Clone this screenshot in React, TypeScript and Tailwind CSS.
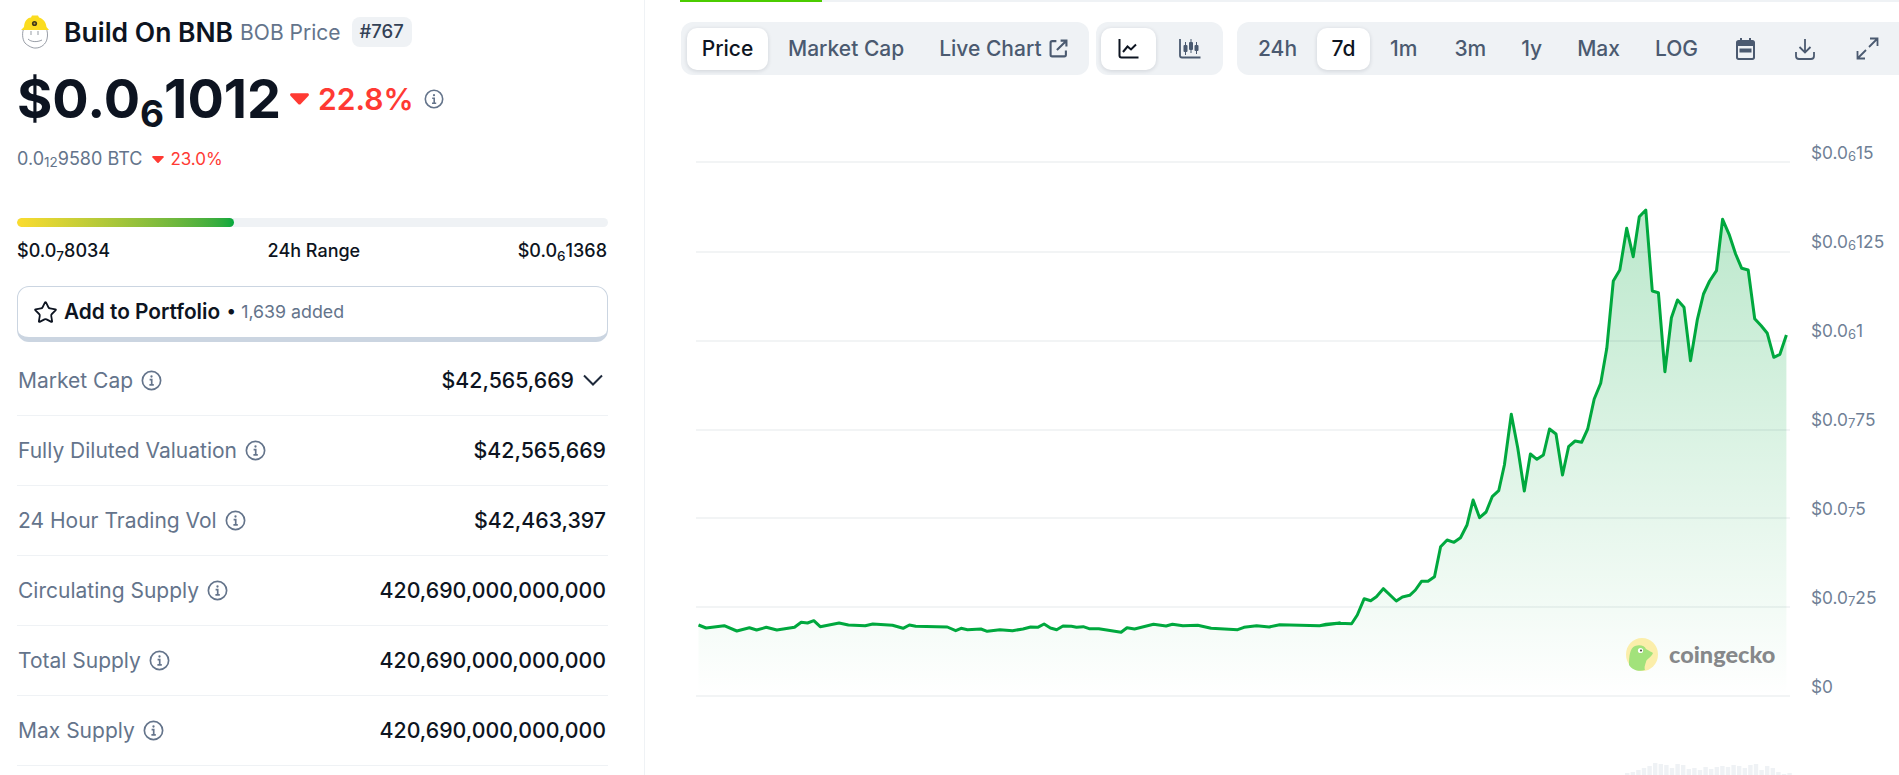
import { Star } from 'lucide-react';

const xFrom = (x: number, x0: number, k: number) => x0 + x / k;

// traced from the picture, flat part then the climb
const flat = [[44,195],[62,204],[105,197],[135,213],[165,203],[182,210],[205,202],[230,210],[272,202],[288,187],[303,189],[318,182],[333,200],[378,189],[400,195],[440,197],[458,192],[505,196],[530,205],[545,195],[560,199],[635,201],[655,212],[668,205],[683,209],[715,207],[730,214],[760,209],[790,212],[815,207],[833,201],[850,202],[865,192],[880,204],[895,209],[910,198],[930,199],[942,202],[958,200],[972,206],[995,206],[1048,217],[1062,203],[1080,207],[1125,193],[1155,198],[1170,193],[1195,197],[1230,196],[1262,205],[1325,209],[1340,202],[1370,197],[1400,201],[1425,194],[1520,197],[1535,193],[1568,189]].map(([x, y]) => [xFrom(x, 680, 2.376), 560 + y / 3]);
const climb = [[50,467],[100,460],[135,461],[150,435],[168,386],[185,392],[200,380],[218,356],[252,393],[268,381],[287,376],[302,360],[318,334],[335,334],[352,320],[368,230],[385,210],[403,217],[420,203],[437,165],[453,90],[470,143],[487,126],[503,80],[520,62]].map(([x, y]) => [xFrom(x, 1300, 2.617), 470 + y / 3]);
const peak = [[535,855],[553,703],[570,805],[587,933],[603,822],[620,838],[637,825],[653,747],[670,762],[687,885],[703,800],[720,783],[737,787],[753,747],[770,657],[787,610],[803,505],[820,303],[837,270],[855,145],[872,230],[888,110],[905,90],[922,333],[938,338],[955,575],[972,413],[988,360],[1005,382],[1022,542],[1040,418],[1056,342],[1072,303],[1090,272],[1106,118],[1123,163],[1140,222],[1156,265],[1173,270],[1190,416],[1207,437],[1223,460],[1240,532],[1256,523],[1273,465]].map(([x, y]) => [xFrom(x, 1300, 2.617), 180 + y / 3]);
const points = [...flat, ...climb, ...peak];
const linePath = points.map(([x, y], i) => `${i ? 'L' : 'M'}${x.toFixed(1)} ${y.toFixed(1)}`).join(' ');
const lastX = points[points.length - 1][0].toFixed(1);
const areaPath = `${linePath} L${lastX} 696 L${points[0][0].toFixed(1)} 696 Z`;

const gridYs = [162, 252, 341, 430, 518, 607, 696];
const volumes = [2, 3, 5, 7, 9, 12, 11, 10, 7, 11, 10, 6, 7, 5, 8, 6, 8, 9, 8, 10, 9, 7, 10, 11, 5, 9, 7, 3, 1, 2];

const stats = [
  { label: 'Market Cap', value: '$42,565,669', chevron: true },
  { label: 'Fully Diluted Valuation', value: '$42,565,669' },
  { label: '24 Hour Trading Vol', value: '$42,463,397' },
  { label: 'Circulating Supply', value: '420,690,000,000,000' },
  { label: 'Total Supply', value: '420,690,000,000,000' },
  { label: 'Max Supply', value: '420,690,000,000,000' },
];

function InfoIcon({ className = 'w-[21px] h-[21px]' }: { className?: string }) {
  return (
    <svg className={`${className} shrink-0 text-[#64748b]`} viewBox="0 0 20 20" fill="none" stroke="currentColor">
      <circle cx="10" cy="10" r="8.7" strokeWidth="1.6" />
      <path d="M8.2 9.2H10.2V14M8 14.2H12.2" strokeWidth="1.6" />
      <circle cx="10" cy="6.2" r="1.1" fill="currentColor" stroke="none" />
    </svg>
  );
}

function DownTriangle({ className }: { className: string }) {
  return (
    <svg className={className} viewBox="0 0 20 12" fill="#ff3a33">
      <path d="M1.6 0H18.4C19.7 0 20.4 1.5 19.5 2.5L11.1 11.4C10.5 12 9.5 12 8.9 11.4L0.5 2.5C-0.4 1.5 0.3 0 1.6 0Z" />
    </svg>
  );
}

function HardHatLogo() {
  return (
    <svg className="w-[30px] h-[34px] shrink-0" viewBox="0 0 30 34" fill="none">
      <path d="M4 13C2 17 2 24 5 28C8 31 13 33.5 16 33C21 33 26 29 27 24C28 20 27.5 16 26 13" stroke="#6b7280" strokeWidth="0.7" fill="#fff" />
      <path d="M11 16V20M18 16V20M8 24C11 27 17 27.5 22 25" stroke="#6b7280" strokeWidth="0.7" />
      <path d="M1 15L4 12C4.5 6 7 3 11 2.5L12 0.5H18L19 2.5C23 3.5 26 7 26.5 12L29 15Z" fill="#fbdc1f" />
      <circle cx="14.5" cy="8.5" r="2.6" fill="#3f3a1a" />
      <circle cx="14.5" cy="8.5" r="1" fill="#c9a227" />
    </svg>
  );
}

function GeckoMark() {
  return (
    <svg className="w-[32px] h-[33px] shrink-0" viewBox="0 0 32 33">
      <ellipse cx="16" cy="16.5" rx="16" ry="16.5" fill="#fbeeaa" />
      <path d="M3 27C3 18 4 10 9 8C14 6 19 8 20 11C23 13 26 14 27 15C25 20 20 21 20 24C19 27 18 30 19 32C13 34 6 32 3 27Z" fill="#a2e27b" />
      <circle cx="14.5" cy="12.5" r="2.6" fill="#fff" />
      <circle cx="15" cy="12.5" r="1.1" fill="#57534e" />
    </svg>
  );
}

function TabBtn({ children, active }: { children: React.ReactNode; active?: boolean }) {
  return (
    <div className={`h-[42px] flex items-center justify-center rounded-[10px] ${active ? 'bg-white text-[#0d1421] shadow-[0_1px_4px_rgba(15,23,42,0.14)]' : 'text-[#4b5a70]'}`}>
      {children}
    </div>
  );
}

function AxisLabel({ head, sub, tail }: { head: string; sub?: string; tail?: string }) {
  return (
    <div className="h-[89px] flex items-center text-[17.3px] text-[#6f7f96] leading-none">
      {head}
      {sub && <span className="text-[13px] relative top-[4px]">{sub}</span>}
      {tail}
    </div>
  );
}

export default function App() {
  return (
    <div className="h-[775px] w-[1899px] overflow-hidden bg-white flex font-[family-name:Inter] text-[#0d1421]">
      {/* Left column */}
      <div className="w-[645px] h-full shrink-0 border-r border-[#eff2f5] pl-[17px] pr-[36px] pt-[15px]">
        <div className="flex items-center h-[34px] pl-[3px]">
          <HardHatLogo />
          <span className="ml-[14px] text-[26.5px] font-semibold leading-none">Build On BNB</span>
          <span className="ml-[7px] text-[21px] text-[#64748b] leading-none">BOB Price</span>
          <span className="ml-[11px] h-[30px] px-[8px] flex items-center rounded-[8px] bg-[#eff2f5] text-[18.5px] font-medium text-[#334155]">#767</span>
        </div>

        <div className="flex items-center h-[66px] mt-[17px]">
          <span className="text-[54px] font-bold leading-none">
            $0.0<span className="text-[37px] relative top-[9px]">6</span>1012
          </span>
          <DownTriangle className="w-[19px] h-[12px] ml-[9px] shrink-0" />
          <span className="ml-[9px] text-[30px] font-semibold text-[#ff3a33] leading-none">22.8%</span>
          <InfoIcon className="w-[20px] h-[20px] ml-[10px]" />
        </div>

        <div className="flex items-center h-[24px] mt-[15px] text-[18px] text-[#64748b] leading-none">
          0.0<span className="text-[13.5px] relative top-[4px]">12</span>9580 BTC
          <DownTriangle className="w-[12px] h-[7px] ml-[10px] shrink-0" />
          <span className="ml-[6px] text-[17px] text-[#ff3a33]">23.0%</span>
        </div>

        <div className="mt-[47px] h-[9px] rounded-full bg-[#eff2f5] overflow-hidden">
          <div className="h-full w-[217px] rounded-full bg-gradient-to-r from-[#fbdc2e] to-[#00a83e]" />
        </div>

        <div className="flex items-center justify-between h-[24px] mt-[12px] text-[18px] font-medium leading-none">
          <span>$0.0<span className="text-[13.5px] relative top-[4px]">7</span>8034</span>
          <span>24h Range</span>
          <span className="pr-[1px]">$0.0<span className="text-[13.5px] relative top-[4px]">6</span>1368</span>
        </div>

        <div className="mt-[23px] h-[56px] rounded-[12px] border-[1.5px] border-b-[5px] border-[#cbd5e1] flex items-center pl-[15px] bg-white">
          <Star className="w-[25px] h-[25px] text-[#0d1421] shrink-0" strokeWidth={1.7} />
          <span className="ml-[6px] text-[20.8px] font-semibold leading-none">Add to Portfolio</span>
          <span className="ml-[6px] text-[17.8px] text-[#64748b] leading-none"><span className="text-[#0d1421]">•</span> 1,639 added</span>
        </div>

        <div className="mt-[4px]">
          {stats.map((s) => (
            <div key={s.label} className="h-[70px] flex items-center justify-between border-b-[1.5px] border-[#eff2f5] pl-[1px] pr-[2px]">
              <div className="flex items-center gap-[8px] text-[21px] text-[#64748b] leading-none">
                {s.label}
                <InfoIcon />
              </div>
              <div className="flex items-center text-[21.3px] font-medium leading-none">
                {s.value}
                {s.chevron && (
                  <svg className="w-[20px] h-[12px] ml-[9px] mr-[3px] text-[#1e293b]" viewBox="0 0 20 12" fill="none" stroke="currentColor" strokeWidth="2">
                    <path d="M1 1.5L10 10.5L19 1.5" />
                  </svg>
                )}
              </div>
            </div>
          ))}
        </div>
      </div>

      {/* Right column */}
      <div className="flex-1 min-w-0 h-full">
        <div className="h-[2px] bg-[#eff2f5] ml-[35px]">
          <div className="h-full w-[142px] bg-[#4bcc00]" />
        </div>

        <div className="flex items-center gap-[7px] ml-[36px] mt-[20px] text-[21px] font-medium leading-none">
          <div className="h-[53px] w-[408px] shrink-0 rounded-[12px] bg-[#eff2f5] flex items-center px-[6px]">
            <div className="w-[81px]"><TabBtn active>Price</TabBtn></div>
            <div className="ml-[20px]"><TabBtn>Market Cap</TabBtn></div>
            <div className="ml-[35px]">
              <TabBtn>
                Live Chart
                <svg className="w-[19px] h-[19px] ml-[7px]" viewBox="0 0 18 18" fill="none" stroke="currentColor" strokeWidth="2">
                  <path d="M7 2H3C2 2 1.5 2.5 1.5 3.5V15C1.5 16 2 16.5 3 16.5H14.5C15.5 16.5 16 16 16 15V11" />
                  <path d="M11 1.5H16.5V7M16.2 1.8L7.5 10.5" />
                </svg>
              </TabBtn>
            </div>
          </div>

          <div className="h-[53px] w-[127px] shrink-0 rounded-[12px] bg-[#eff2f5] flex items-center px-[5px]">
            <div className="w-[55px]">
              <TabBtn active>
                <svg className="w-[21px] h-[21px]" viewBox="0 0 21 21" fill="none" stroke="currentColor" strokeWidth="2">
                  <path d="M1.5 1V17.5C1.5 19 2.3 19.5 3.5 19.5H20.5" />
                  <path d="M5 14L9.5 8.5L13 11.5L18 6.5" />
                </svg>
              </TabBtn>
            </div>
            <div className="ml-[23px]">
              <TabBtn>
                <svg className="w-[22px] h-[21px]" viewBox="0 0 22 21" fill="currentColor">
                  <path d="M1 1V17.5C1 19 1.8 19.5 3 19.5H21.5" fill="none" stroke="currentColor" strokeWidth="1.8" />
                  <rect x="4.5" y="7" width="4" height="7" rx="1" /><rect x="6" y="4" width="1" height="13" />
                  <rect x="10" y="4" width="4" height="8" rx="1" /><rect x="11.5" y="1" width="1" height="14" />
                  <rect x="15.5" y="7" width="4" height="6" rx="1" /><rect x="17" y="4" width="1" height="12" />
                </svg>
              </TabBtn>
            </div>
          </div>

          <div className="h-[53px] flex-1 ml-[7px] rounded-l-[12px] bg-[#eff2f5] flex items-center pl-[21px]">
            <TabBtn>24h</TabBtn>
            <div className="w-[53px] ml-[20px]"><TabBtn active>7d</TabBtn></div>
            <div className="ml-[20px]"><TabBtn>1m</TabBtn></div>
            <div className="ml-[37px]"><TabBtn>3m</TabBtn></div>
            <div className="ml-[35px]"><TabBtn>1y</TabBtn></div>
            <div className="ml-[35px]"><TabBtn>Max</TabBtn></div>
            <div className="ml-[35px]"><TabBtn>LOG</TabBtn></div>
            <div className="ml-[38px]">
              <TabBtn>
                <svg className="w-[19px] h-[22px]" viewBox="0 0 19 22" fill="currentColor">
                  <path d="M4 0H6V2H13V0H15V2H16.5C18 2 19 3 19 4.5V19.5C19 21 18 22 16.5 22H2.5C1 22 0 21 0 19.5V4.5C0 3 1 2 2.5 2H4ZM2 8V19C2 19.6 2.4 20 3 20H16C16.6 20 17 19.6 17 19V8Z" />
                  <rect x="3.5" y="10.5" width="12" height="4" />
                </svg>
              </TabBtn>
            </div>
            <div className="ml-[40px]">
              <TabBtn>
                <svg className="w-[20px] h-[22px]" viewBox="0 0 20 22" fill="none" stroke="currentColor" strokeWidth="1.8">
                  <path d="M10 1V14M4.5 9L10 14.5L15.5 9" />
                  <path d="M1 14V18C1 19.8 2 21 4 21H16C18 21 19 19.8 19 18V14" />
                </svg>
              </TabBtn>
            </div>
            <div className="ml-[41px]">
              <TabBtn>
                <svg className="w-[23px] h-[23px]" viewBox="0 0 23 23" fill="none" stroke="currentColor" strokeWidth="1.8">
                  <path d="M14 1.5H21.5V9M21 2L13 10" />
                  <path d="M9 21.5H1.5V14M2 21L10 13" />
                </svg>
              </TabBtn>
            </div>
          </div>
        </div>

        <div className="relative flex mt-[25px] ml-[45px]">
          <svg className="w-[1122px] h-[675px] shrink-0" viewBox="690 100 1122 675" fill="none">
            <defs>
              <linearGradient id="priceFill" gradientUnits="userSpaceOnUse" x1="0" y1="205" x2="0" y2="696">
                <stop offset="0" stopColor="#00a83e" stopOpacity="0.27" />
                <stop offset="1" stopColor="#00a83e" stopOpacity="0" />
              </linearGradient>
            </defs>
            <path d={areaPath} fill="url(#priceFill)" />
            {gridYs.map((y) => (
              <path key={y} d={`M696 ${y}H1790`} stroke="#0f2a4a" strokeOpacity="0.07" strokeWidth="1.5" />
            ))}
            {volumes.map((h, i) => (
              <rect key={i} x={1625 + i * 5.6} y={775 - h} width="4.4" height={h} fill="#eff2f5" />
            ))}
            <path d={linePath} stroke="#00a83e" strokeWidth="3" strokeLinejoin="round" />
          </svg>

          <div className="absolute left-[936px] top-[538px] flex items-center gap-[11px]">
            <GeckoMark />
            <span className="text-[23.5px] font-black text-[#86888a] leading-none font-[family-name:Lato]">coingecko</span>
          </div>

          <div className="flex flex-col mt-[8px] -ml-[1px]">
            <AxisLabel head="$0.0" sub="6" tail="15" />
            <AxisLabel head="$0.0" sub="6" tail="125" />
            <AxisLabel head="$0.0" sub="6" tail="1" />
            <AxisLabel head="$0.0" sub="7" tail="75" />
            <AxisLabel head="$0.0" sub="7" tail="5" />
            <AxisLabel head="$0.0" sub="7" tail="25" />
            <AxisLabel head="$0" />
          </div>
        </div>
      </div>
    </div>
  );
}
